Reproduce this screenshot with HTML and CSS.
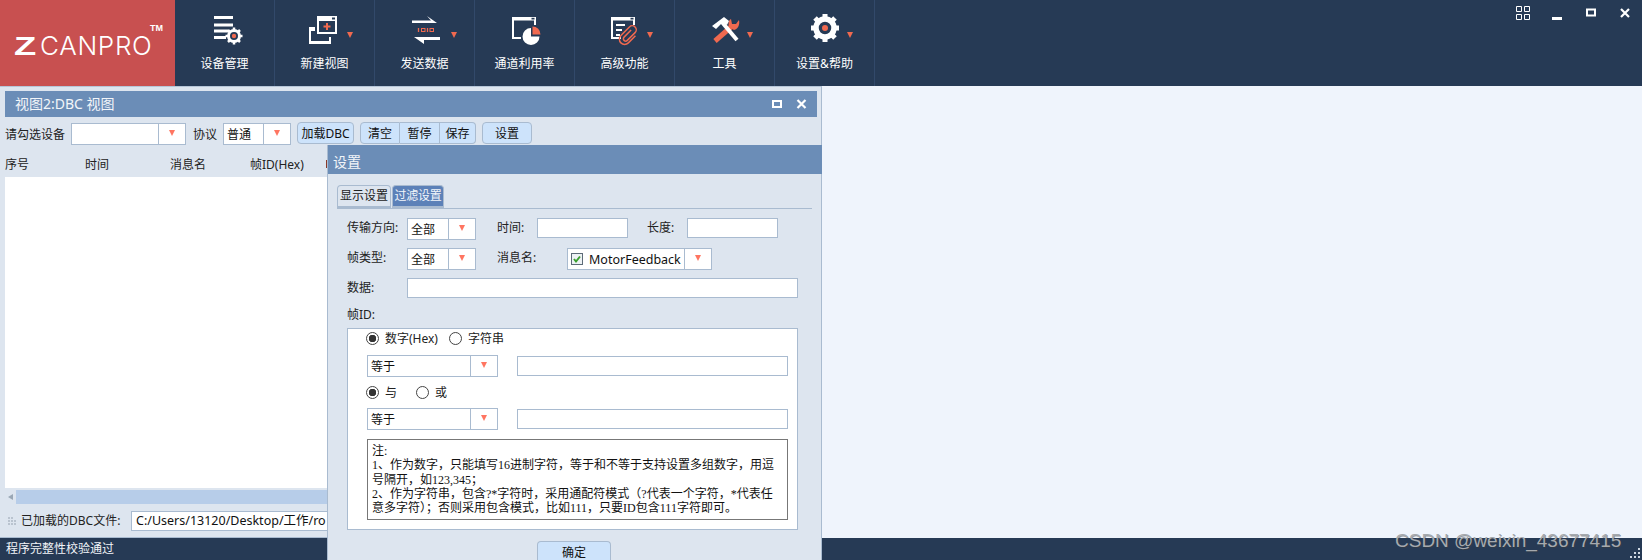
FILE: index.html
```html
<!doctype html>
<html>

<head>
    <meta charset="utf-8" />
    <title>ZCANPRO</title>
    <link rel="stylesheet" href="styles.css">
</head>

<body>
<div class="page">

    <!-- top bar -->
    <header class="topbar">
        <div class="logo"><span class="logo-z">Z</span><span class="logo-text">CANPRO</span><span class="logo-tm">TM</span></div>

        <div class="nav-item">
            <svg class="nav-icon" viewBox="0 0 40 36">
                <path d="M9 5.500H28M9 13H28M9 19H23M9 25.500H21" stroke="#fff" stroke-width="3" fill="none"/>
                <circle cx="29" cy="24" r="5.500" fill="none" stroke="#fff" stroke-width="3"/>
                <path d="M29 15.500V19M29 29V32.500M20.500 24H24M34 24H37.500M23 18L25.500 20.500M32.500 27.500L35 30M35 18L32.500 20.500M25.500 27.500L23 30" stroke="#fff" stroke-width="2.500"/>
                <circle cx="29" cy="24" r="2.200" fill="#f0694f"/>
            </svg>
            <span class="nav-label">设备管理</span>
        </div>
        <div class="nav-item">
            <svg class="nav-icon" viewBox="0 0 40 36">
                <path d="M12 4H32V22H12ZM14 9V20H30V9Z" fill="#fff" fill-rule="evenodd"/>
                <path d="M27 5.500H30V7.500H27Z" fill="#263a55"/>
                <path d="M22 11V18M18.500 14.500H25.500" stroke="#f0694f" stroke-width="2"/>
                <path d="M4 15H10V19H6V29H24V25H26V32H4Z" fill="#fff"/>
            </svg>
            <span class="nav-label">新建视图</span>
            <i class="nav-arrow"></i>
        </div>
        <div class="nav-item">
            <svg class="nav-icon" viewBox="0 0 40 36">
                <path d="M7 8.500H26L22 4L32 11H7Z" fill="#fff"/>
                <path d="M35 25H19V32L9 25H19V28H35Z" fill="#fff"/>
                <path d="M13.500 16V20M22.500 16V20" stroke="#f0694f" stroke-width="1.300"/>
                <rect x="16.500" y="16.500" width="3.500" height="3" fill="none" stroke="#f0694f"/>
                <rect x="25" y="16.500" width="3.500" height="3" fill="none" stroke="#f0694f"/>
            </svg>
            <span class="nav-label">发送数据</span>
            <i class="nav-arrow nav-arrow-far"></i>
        </div>
        <div class="nav-item">
            <svg class="nav-icon" viewBox="0 0 40 36">
                <path d="M16 26H8V6H30V13" stroke="#fff" stroke-width="2" fill="none"/>
                <path d="M7 5H31V8.500H7Z" fill="#fff"/>
                <path d="M26.500 5.800H29.500V7.500H26.500Z" fill="#263a55"/>
                <path d="M26 16A8.500 8.500 0 1 0 34.500 24.500H26Z" fill="#fff"/>
                <path d="M27.500 14.500A8 8 0 0 1 35.500 22.500H27.500Z" fill="#f0694f"/>
            </svg>
            <span class="nav-label">通道利用率</span>
        </div>
        <div class="nav-item">
            <svg class="nav-icon" viewBox="0 0 40 36">
                <path d="M16 26H7V6H29V13" stroke="#fff" stroke-width="2" fill="none"/>
                <path d="M6 5H30V8.500H6Z" fill="#fff"/>
                <path d="M25.500 5.800H28.500V7.500H25.500Z" fill="#263a55"/>
                <path d="M11 13H20M11 18H17M11 23H15" stroke="#fff" stroke-width="2"/>
                <g transform="rotate(45 24 23)">
                    <path d="M22 18V28a2.300 2.300 0 0 0 4.600 0V17a4 4 0 0 0 -8 0V29a5 5 0 0 0 10.500 0V19" stroke="#f0694f" stroke-width="1.500" fill="none"/>
                </g>
            </svg>
            <span class="nav-label">高级功能</span>
            <i class="nav-arrow"></i>
        </div>
        <div class="nav-item">
            <svg class="nav-icon" viewBox="0 0 40 36">
                <path d="M10 29L26 15" stroke="#f0694f" stroke-width="5"/>
                <path d="M24 15C23 10 24 8 26 7L27 12L31 12L34 8C35 13 33 17 29 18Z" fill="#f0694f"/>
                <path d="M16 9L32 28" stroke="#fff" stroke-width="4"/>
                <path d="M7 14L19 5L24 9L22 13L17 11L11 17Z" fill="#fff"/>
            </svg>
            <span class="nav-label">工具</span>
            <i class="nav-arrow"></i>
        </div>
        <div class="nav-item">
            <svg class="nav-icon" viewBox="0 0 40 36">
                <circle cx="20" cy="16" r="9" fill="none" stroke="#fff" stroke-width="5.500"/>
                <path d="M20 2V7M20 25V30M6 16H11M29 16H34M10 6L13.500 9.500M26.500 22.500L30 26M30 6L26.500 9.500M13.500 22.500L10 26" stroke="#fff" stroke-width="5"/>
                <circle cx="20" cy="16" r="3" fill="#f0694f"/>
            </svg>
            <span class="nav-label">设置&amp;帮助</span>
            <i class="nav-arrow"></i>
        </div>

        <div class="win-btns">
            <svg width="14" height="14" viewBox="0 0 14 14">
                <path d="M.5.500H5.500V5.500H.5ZM8.500.500H13.500V5.500H8.500ZM.5 8.500H5.500V13.500H.5ZM8.500 8.500H13.500V13.500H8.500Z" fill="none" stroke="#fff"/>
            </svg>
            <svg width="10" height="10" viewBox="0 0 10 10" class="win-min"><path d="M0 5H10V8H0Z" fill="#fff"/></svg>
            <svg width="10" height="10" viewBox="0 0 10 10" class="win-max"><path d="M1 1.500H9V7.500H1Z" fill="none" stroke="#fff" stroke-width="2"/></svg>
            <svg width="10" height="10" viewBox="0 0 10 10" class="win-close"><path d="M1 1L9 9M9 1L1 9" stroke="#fff" stroke-width="2.200"/></svg>
        </div>
    </header>

    <div class="main">
        <!-- dbc view window -->
        <section class="view">
            <div class="view-title">
                <span>视图2:DBC 视图</span>
                <div class="view-btns">
                    <svg width="10" height="10" viewBox="0 0 10 10"><path d="M1 2H9V8H1Z" fill="none" stroke="#fff" stroke-width="2"/></svg>
                    <svg width="11" height="10" viewBox="0 0 11 10"><path d="M1.500 1L9.500 9M9.500 1L1.500 9" stroke="#fff" stroke-width="2.200"/></svg>
                </div>
            </div>
            <div class="toolbar">
                <span class="tb-label">请勾选设备</span>
                <div class="combo combo-device"><span class="combo-val"></span><span class="combo-arrow"></span></div>
                <span class="tb-label tb-proto">协议</span>
                <div class="combo combo-proto"><span class="combo-val">普通</span><span class="combo-arrow"></span></div>
                <button class="btn btn-dbc" type="button">加载DBC</button>
                <div class="btn-group">
                    <button class="btn" type="button">清空</button>
                    <button class="btn" type="button">暂停</button>
                    <button class="btn" type="button">保存</button>
                </div>
                <button class="btn btn-set" type="button">设置</button>
            </div>
            <div class="col-head">
                <span class="col col-no">序号</span>
                <span class="col col-time">时间</span>
                <span class="col col-msg">消息名</span>
                <span class="col col-id">帧ID(Hex)</span>
                <i class="col-next"></i>
            </div>
            <div class="table-body"></div>
            <div class="hscroll"><i class="hscroll-arrow"></i><div class="hscroll-thumb"></div></div>
            <div class="file-row">
                <svg class="grip" width="8" height="8" viewBox="0 0 8 8"><path d="M0 0H2V2H0ZM3 0H5V2H3ZM0 3H2V5H0ZM3 3H5V5H3ZM6 3H8V5H6ZM0 6H2V8H0ZM3 6H5V8H3ZM6 6H8V8H6Z" fill="#b9c3cf"/></svg>
                <span class="file-label">已加载的DBC文件:</span>
                <div class="file-path">C:/Users/13120/Desktop/工作/ro</div>
            </div>
        </section>
        <div class="desktop"></div>
    </div>

    <footer class="statusbar">程序完整性校验通过</footer>

    <!-- settings dialog, lies over the view -->
    <div class="dialog">
        <div class="dialog-title">设置</div>
        <div class="tabs">
            <span class="tab">显示设置</span>
            <span class="tab tab-on">过滤设置</span>
        </div>
        <div class="form-row">
            <span class="lbl lbl-first">传输方向:</span>
            <div class="combo combo-small"><span class="combo-val">全部</span><span class="combo-arrow"></span></div>
            <span class="lbl lbl-mid">时间:</span>
            <div class="input input-small"></div>
            <span class="lbl lbl-end">长度:</span>
            <div class="input input-small"></div>
        </div>
        <div class="form-row">
            <span class="lbl lbl-first">帧类型:</span>
            <div class="combo combo-small"><span class="combo-val">全部</span><span class="combo-arrow"></span></div>
            <span class="lbl lbl-mid lbl-wide">消息名:</span>
            <div class="combo combo-msg">
                <span class="combo-val">
                    <svg class="check" width="12" height="12" viewBox="0 0 12 12"><rect x=".5" y=".5" width="11" height="11" fill="#eef2f5" stroke="#5d6b78"/><path d="M3 6L5 8.500L9 3.500" stroke="#3aa02f" stroke-width="2" fill="none"/></svg>MotorFeedback
                </span>
                <span class="combo-arrow"></span>
            </div>
        </div>
        <div class="form-row">
            <span class="lbl lbl-first">数据:</span>
            <div class="input input-data"></div>
        </div>
        <div class="id-label">帧ID:</div>
        <div class="id-box">
            <div class="radio-row radio-row-top">
                <i class="radio radio-on"></i><span class="radio-text">数字(Hex)</span>
                <i class="radio"></i><span class="radio-text">字符串</span>
            </div>
            <div class="cond-row">
                <div class="combo combo-cond"><span class="combo-val">等于</span><span class="combo-arrow"></span></div>
                <div class="input input-cond"></div>
            </div>
            <div class="radio-row">
                <i class="radio radio-on"></i><span class="radio-text radio-and">与</span>
                <i class="radio"></i><span class="radio-text">或</span>
            </div>
            <div class="cond-row cond-row-second">
                <div class="combo combo-cond"><span class="combo-val">等于</span><span class="combo-arrow"></span></div>
                <div class="input input-cond"></div>
            </div>
            <div class="note">注:<br>1、作为数字，只能填写16进制字符，等于和不等于支持设置多组数字，用逗<br>号隔开，如123,345；<br>2、作为字符串，包含?*字符时，采用通配符模式（?代表一个字符，*代表任<br>意多字符）；否则采用包含模式，比如111，只要ID包含111字符即可。</div>
        </div>
        <button class="btn btn-ok" type="button">确定</button>
    </div>

    <svg class="resize-grip" width="12" height="12" viewBox="0 0 12 12"><path d="M8 0H10V2H8ZM4 4H6V6H4ZM8 4H10V6H8ZM0 8H2V10H0ZM4 8H6V10H4ZM8 8H10V10H8Z" fill="#cfd8e3"/></svg>
    <div class="watermark">CSDN @weixin_43677415</div>
</div>
</body>

</html>
```

FILE: styles.css
```css
* {
    margin: 0;
    padding: 0;
    box-sizing: border-box;
}

body {
    font-family: "Noto Sans", "Noto Sans CJK SC", sans-serif;
    font-size: 12px;
    line-height: 16px;
    color: #222;
    overflow: hidden;
}

.page {
    position: relative;
    width: 1642px;
    height: 560px;
    display: flex;
    flex-direction: column;
    overflow: hidden;
}

/* top bar start */
.topbar {
    height: 86px;
    background-color: #263a55;
    display: flex;
    flex-shrink: 0;
}

.logo {
    position: relative;
    width: 175px;
    height: 86px;
    background-color: #c85050;
    color: #fff;
    padding: 28px 0 0 14px;
    display: flex;
    line-height: 36px;
}

.logo-z {
    display: block;
    width: 26px;
    font-family: "Liberation Sans", sans-serif;
    font-weight: bold;
    font-size: 26px;
    transform: scaleX(1.4);
    transform-origin: left center;
}

.logo-text {
    font-family: "Inter", sans-serif;
    font-weight: 300;
    font-size: 26px;
    letter-spacing: .7px;
}

.logo-tm {
    position: absolute;
    left: 150px;
    top: 23px;
    font-family: "Liberation Sans", sans-serif;
    font-weight: bold;
    font-size: 9px;
    line-height: 10px;
}

.nav-item {
    position: relative;
    width: 100px;
    border-right: 1px solid #32496a;
    color: #fff;
    text-align: center;
}

.nav-icon {
    position: absolute;
    left: 30px;
    top: 12px;
    width: 40px;
    height: 36px;
}

.nav-label {
    position: absolute;
    left: 0;
    right: 0;
    top: 56px;
}

.nav-arrow {
    position: absolute;
    right: 21px;
    top: 32px;
    border-left: 3.500px solid transparent;
    border-right: 3.500px solid transparent;
    border-top: 6px solid #f0694f;
}

.nav-arrow-far {
    right: 17px;
}

.win-btns {
    margin-left: auto;
    padding: 6px 12px 0 0;
    display: flex;
    align-items: flex-start;
}

.win-min {
    margin: 6px 0 0 22px;
}

.win-max {
    margin: 2px 0 0 24px;
}

.win-close {
    margin: 2px 0 0 24px;
}
/* top bar end */

/* view start */
.main {
    flex: 1;
    display: flex;
    min-height: 0;
}

.view {
    width: 822px;
    background-color: #dde5ef;
    border-top: 1px solid #b6c6d8;
    border-right: 1px solid #a9bbd0;
    border-bottom: 1px solid #a9bbd0;
    padding: 4px 4px 0 5px;
    display: flex;
    flex-direction: column;
}

.view-title {
    height: 26px;
    flex-shrink: 0;
    background-color: #6b8db7;
    color: #f2f5f9;
    font-size: 14px;
    line-height: 26px;
    padding: 0 8px 0 10px;
    display: flex;
    justify-content: space-between;
    align-items: center;
}

.view-btns {
    display: flex;
    gap: 14px;
    margin-right: 2px;
}

.toolbar {
    height: 28px;
    flex-shrink: 0;
    display: flex;
    align-items: flex-start;
    padding-top: 6px;
}

.tb-label {
    width: 66px;
    line-height: 22px;
    padding-top: 1px;
    flex-shrink: 0;
}

.tb-proto {
    width: 30px;
    margin-left: 7px;
}

.combo {
    display: flex;
    height: 22px;
    border: 1px solid #a9bbd0;
    background-color: #fff;
    flex-shrink: 0;
    line-height: 20px;
    color: #111;
}

.combo-val {
    flex: 1;
    padding: 1px 0 0 3px;
    display: flex;
    align-items: center;
    white-space: nowrap;
    overflow: hidden;
}

.combo-arrow {
    position: relative;
    width: 27px;
    border-left: 1px solid #a9bbd0;
    flex-shrink: 0;
}

.combo-arrow::after {
    content: "";
    position: absolute;
    left: 10px;
    top: 6px;
    border-left: 3.500px solid transparent;
    border-right: 3.500px solid transparent;
    border-top: 6px solid #ff7561;
}

.combo-device {
    width: 115px;
}

.combo-proto {
    width: 68px;
}

.btn {
    height: 22px;
    background-color: #cde3fb;
    border: 1px solid #a9bbd0;
    border-radius: 4px;
    padding-top: 2px;
    font-family: inherit;
    font-size: 12px;
    line-height: 18px;
    color: #111;
}

.btn-dbc {
    width: 57px;
    margin: -1px 0 0 6px;
}

.btn-group {
    display: flex;
    margin: -1px 0 0 6px;
}

.btn-group .btn {
    width: 40px;
    border-radius: 0;
    border-left-width: 0;
}

.btn-group .btn:first-child {
    border-left-width: 1px;
    border-radius: 4px 0 0 4px;
}

.btn-group .btn:last-child {
    width: 36px;
    border-radius: 0 4px 4px 0;
}

.btn-set {
    width: 50px;
    margin: -1px 0 0 6px;
}

.col-head {
    height: 32px;
    flex-shrink: 0;
    display: flex;
    line-height: 40px;
}

.col-no {
    width: 80px;
}

.col-time {
    width: 85px;
}

.col-msg {
    width: 80px;
}

.col-id {
    width: 76px;
}

.col-next {
    width: 2px;
    height: 8px;
    margin-top: 15px;
    background-color: #8a3a2a;
}

.table-body {
    flex: 1;
    background-color: #fff;
}

.hscroll {
    height: 15px;
    flex-shrink: 0;
    margin-top: 1px;
    display: flex;
    align-items: center;
}

.hscroll-arrow {
    width: 0;
    margin: 0 3px 0 3px;
    border-top: 3.500px solid transparent;
    border-bottom: 3.500px solid transparent;
    border-right: 5px solid #9aa7b5;
}

.hscroll-thumb {
    flex: 1;
    height: 14px;
    background-color: #b7cde9;
}

.file-row {
    height: 33px;
    flex-shrink: 0;
    display: flex;
    align-items: center;
    padding: 0 0 0 3px;
}

.grip {
    margin-right: 5px;
}

.file-label {
    width: 110px;
    flex-shrink: 0;
}

.file-path {
    flex: 1;
    height: 20px;
    background-color: #fff;
    border: 1px solid #a9bbd0;
    line-height: 18px;
    padding-left: 4px;
    white-space: nowrap;
    color: #111;
    font-size: 12.500px;
}

.desktop {
    flex: 1;
    background-color: #eff4fc;
}

.statusbar {
    height: 22px;
    flex-shrink: 0;
    background-color: #263a55;
    color: #f2f5f9;
    line-height: 22px;
    padding-left: 6px;
}
/* view end */

/* dialog start */
.dialog {
    position: absolute;
    left: 327px;
    top: 145px;
    width: 495px;
    height: 415px;
    background-color: #dde5ef;
    border-left: 1px solid #a9bbd0;
    border-right: 1px solid #a9bbd0;
    padding-left: 19px;
}

.dialog-title {
    height: 29px;
    margin-left: -19px;
    margin-right: -1px;
    background-color: #6b8db7;
    color: #f2f5f9;
    font-size: 14px;
    line-height: 29px;
    padding: 2px 0 0 5px;
}

.tabs {
    display: flex;
    gap: 1px;
    width: 475px;
    height: 24px;
    margin: 11px 0 9px -10px;
    border-bottom: 1px solid #a9bbd0;
}

.tab {
    width: 54px;
    height: 23px;
    background-color: #dde5ef;
    border: 1px solid #a9bbd0;
    border-bottom-width: 2px;
    border-radius: 4px 4px 0 0;
    text-align: center;
    line-height: 20px;
}

.tab-on {
    width: 52px;
    background-color: #5c81b8;
    color: #f2f6fb;
    white-space: nowrap;
    letter-spacing: -.3px;
}

.form-row {
    display: flex;
    height: 22px;
    margin-bottom: 8px;
    line-height: 20px;
}

.lbl-first {
    width: 60px;
}

.lbl-mid {
    width: 40px;
    margin-left: 21px;
}

.lbl-wide {
    width: 70px;
}

.lbl-end {
    width: 40px;
    margin-left: 19px;
}

.input {
    height: 20px;
    background-color: #fff;
    border: 1px solid #a9bbd0;
}

.input-small {
    width: 91px;
}

.input-data {
    width: 391px;
}

.combo-small {
    width: 69px;
}

.combo-msg {
    width: 145px;
}

.combo-msg .combo-val {
    font-size: 12.500px;
}

.check {
    margin: -1px 6px 0 0;
    flex-shrink: 0;
}

.id-label {
    height: 20px;
    line-height: 20px;
    margin-top: -3px;
    margin-bottom: 3px;
}

.id-box {
    width: 451px;
    height: 202px;
    background-color: #fff;
    border: 1px solid #a9bbd0;
    padding-left: 19px;
}

.radio-row {
    display: flex;
    align-items: center;
    height: 20px;
    margin-left: -1px;
}

.radio-row-top {
    height: 18px;
}

.radio {
    width: 13px;
    height: 13px;
    border: 1px solid #444;
    border-radius: 50%;
    background-color: #fff;
    flex-shrink: 0;
    margin-right: 6px;
}

.radio-on {
    background: radial-gradient(circle, #333 0, #333 3.500px, #fff 4px);
}

.radio-text {
    margin-right: 11px;
    padding-top: 1px;
}

.radio-and {
    margin-right: 19px;
}

.cond-row {
    display: flex;
    align-items: center;
    gap: 19px;
    height: 22px;
    margin: 8px 0 5px;
}

.cond-row-second {
    margin-top: 6px;
}

.combo-cond {
    width: 131px;
}

.input-cond {
    width: 271px;
}

.note {
    width: 421px;
    height: 81px;
    margin-top: 9px;
    border: 1px solid #777;
    background-color: #fff;
    font-family: "Liberation Serif", "Noto Sans CJK SC", serif;
    font-size: 12px;
    line-height: 14.300px;
    padding: 4px 0 0 4px;
    color: #111;
    white-space: nowrap;
}

.btn-ok {
    display: block;
    width: 74px;
    height: 19px;
    margin: 11px 0 0 190px;
    padding-top: 2px;
    border-bottom: 0;
    border-radius: 4px 4px 0 0;
    line-height: 15px;
}
/* dialog end */

.resize-grip {
    position: absolute;
    right: 0;
    bottom: 0;
}

.watermark {
    position: absolute;
    left: 1395px;
    top: 530px;
    font-family: "Liberation Sans", sans-serif;
    font-size: 19px;
    line-height: 22px;
    color: #a5a9ae;
    text-shadow: 1px 1px 0 rgba(60, 60, 60, .5);
}
```
